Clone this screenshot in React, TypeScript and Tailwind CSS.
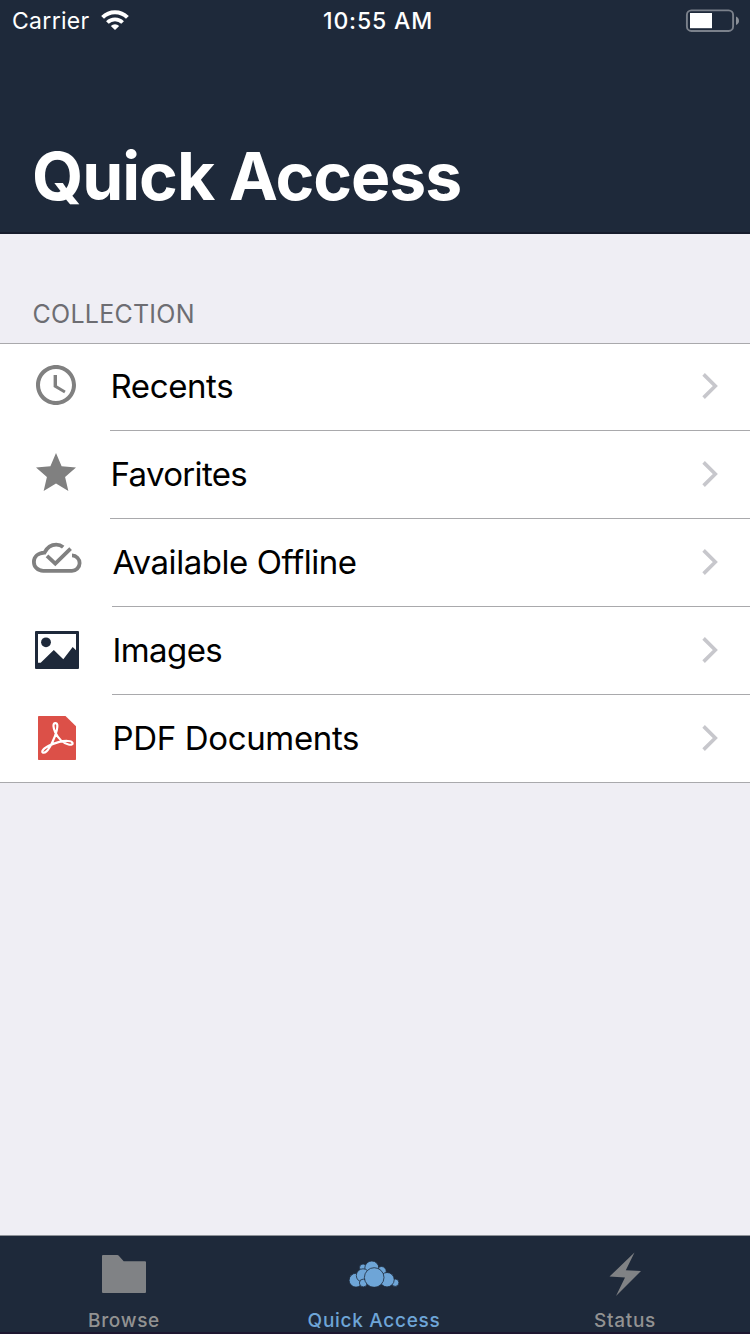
import type { ReactNode } from "react";

function Wifi() {
  return (
    <svg width="28" height="20" viewBox="0 0 28 20" className="ml-[11px] -mt-[2px]">
      <path d="M14 20L9.8 15.9A6.2 6.2 0 0 1 18.2 15.9Z" fill="#fff" />
      <path d="M6.4 12.5A10.8 10.8 0 0 1 21.6 12.5" fill="none" stroke="#fff" strokeWidth="3.8" />
      <path d="M1.6 7.4A17.6 17.6 0 0 1 26.4 7.4" fill="none" stroke="#fff" strokeWidth="4" />
    </svg>
  );
}

function Battery() {
  return (
    <svg width="54" height="24" viewBox="0 0 54 24">
      <rect x="1.9" y="1.4" width="46.2" height="20.6" rx="4.5" fill="none" stroke="#7b818b" strokeWidth="1.9" />
      <rect x="5" y="4" width="22" height="15.2" fill="#fff" />
      <path d="M51 7.5q3 1.3 3 4.3t-3 4.3z" fill="#8b9098" />
    </svg>
  );
}

function ClockIcon() {
  return (
    <svg width="48" height="48" viewBox="0 0 24 24" fill="#808080" className="ml-8 mt-[17px]">
      <path d="M11.99 2C6.47 2 2 6.48 2 12s4.47 10 9.99 10C17.52 22 22 17.52 22 12S17.52 2 11.99 2zM12 20c-4.42 0-8-3.58-8-8s3.58-8 8-8 8 3.58 8 8-3.58 8-8 8zM12.5 7H10.8v6l5.3 3.1.75-1.25-4.35-2.6z" />
    </svg>
  );
}

function StarIcon() {
  return (
    <svg width="48" height="48" viewBox="0 0 24 24" fill="#808080" className="ml-8 mt-[17px]">
      <path d="M12 17.27L18.18 21l-1.64-7.03L22 9.24l-7.19-.61L12 2 9.19 8.63 2 9.24l5.46 4.73L5.82 21z" />
    </svg>
  );
}

function CloudCheckIcon() {
  return (
    <svg width="50" height="31" viewBox="0 0 50 31" fill="none" stroke="#808080" strokeWidth="3.8" className="ml-8 mt-[22px]">
      <path d="M40 13.4A7.7 7.7 0 0 1 39.8 28.8H11.2C5.8 28.8 1.9 24.8 1.9 19.9C1.9 14.8 6 11 12.5 10.6C15.2 5.2 19.3 2.6 24.2 2.6Q28.2 2.6 31.2 5.1" />
      <path d="M15 13.8L23.3 21.6L38.6 6.7" />
    </svg>
  );
}

function ImageIcon() {
  return (
    <svg width="44" height="38" viewBox="0 0 44 38" fill="#1e293a" className="ml-[35px] mt-[23px]">
      <path fillRule="evenodd" d="M1 0H43Q44 0 44 1V37Q44 38 43 38H1Q0 38 0 37V1Q0 0 1 0ZM3 3V31.7H5.7L18.8 19L28.3 28.3L37.7 16L41 19.3V3Z" />
      <circle cx="11" cy="11.3" r="4.9" />
    </svg>
  );
}

function PdfIcon() {
  return (
    <svg width="38" height="44" viewBox="0 0 38 44" className="ml-[38px] mt-5">
      <path d="M0.7 0H27.5L38 10.3V43.3Q38 44 37.3 44H.7Q0 44 0 43.3V.7Q0 0 .7 0Z" fill="#dc5048" />
      <path
        d="M17.4 7.1C14.6 7 15.1 11.9 17.3 16.5C19.6 21.3 24.6 27.2 30.5 28.5C33.4 29.1 35 28.5 34.6 26.9C34 24.6 27 24.4 20.5 26.1C13.4 27.9 5.7 31.7 4.4 35C3.7 37 6.2 37.5 8.4 35.4C12.2 31.8 17 21.5 18.7 14.4C19.8 9.9 19.7 7.2 17.4 7.1Z"
        fill="none"
        stroke="#fff"
        strokeWidth="2.2"
      />
    </svg>
  );
}

function Chevron() {
  return (
    <svg width="18" height="28" viewBox="0 0 18 28" fill="none" stroke="#c7c7cc" strokeWidth="3.6" className="mr-[31px] ml-auto mt-[28px]">
      <path d="M2.6 2.4L14.3 14L2.6 25.6" />
    </svg>
  );
}

function FolderIcon() {
  return (
    <svg width="44" height="38" viewBox="0 0 44 38" fill="#808285" className="mt-[19px]">
      <path d="M1 0H15.3Q16.3 0 17 .9L21.7 6.3H43Q44 6.3 44 7.3V37Q44 38 43 38H1Q0 38 0 37V1Q0 0 1 0Z" />
    </svg>
  );
}

function CloudsIcon() {
  return (
    <svg width="50" height="26" viewBox="0 0 50 26" fill="#6ea5d7" stroke="#1e293a" strokeWidth="0.8" className="mt-[25px]">
      <circle cx="14.1" cy="6.6" r="3.6" />
      <circle cx="32.5" cy="10.2" r="4.7" />
      <circle cx="22.8" cy="7" r="7" />
      <circle cx="7" cy="19.2" r="6.9" />
      <circle cx="14" cy="14.5" r="6.7" />
      <circle cx="14.3" cy="22" r="3.9" />
      <circle cx="46.2" cy="21.7" r="3.7" />
      <circle cx="38" cy="18.7" r="7.2" />
      <circle cx="25.2" cy="16.5" r="9.8" />
    </svg>
  );
}

function BoltIcon() {
  return (
    <svg width="32" height="44" viewBox="0 0 32 44" fill="#808285" className="mt-4">
      <path d="M25.5 .5L16.8 18.3L32 19.1L7 44L16 25.5L.5 24.6Z" />
    </svg>
  );
}

type RowProps = { icon: ReactNode; label: string; tracking: string; inset?: string; last?: boolean };

function Row({ icon, label, tracking, inset = "w-[112px]", last = false }: RowProps) {
  return (
    <div className={`flex items-start ${last ? "h-[87px] border-b border-[#a9a9ac]" : "h-[88px]"}`}>
      <div className={`shrink-0 ${inset}`}>{icon}</div>
      <div className={`flex flex-1 items-start ${last ? "h-[86px]" : "h-[87px] border-b border-[#a9a9ac]"}`}>
        <span className={`whitespace-nowrap pl-[0.5px] text-[33px] leading-[85px] text-black ${tracking}`}>{label}</span>
        <Chevron />
      </div>
    </div>
  );
}

type TabProps = { icon: ReactNode; label: string; color: string };

function Tab({ icon, label, color }: TabProps) {
  return (
    <div className={`flex flex-col items-center ${color}`}>
      <div className="h-[73px]">{icon}</div>
      <span className="text-[19px] font-medium leading-6 tracking-[0.7px]">{label}</span>
    </div>
  );
}

export default function App() {
  return (
    <div className="flex h-[1334px] w-[750px] flex-col overflow-hidden bg-[#efeef4] font-['Inter','Liberation_Sans',sans-serif]">
      <header className="flex h-[234px] flex-col border-b-2 border-[#161c2c] bg-[#1e293a] text-white">
        <div className="grid h-[42px] grid-cols-3 items-center">
          <div className="flex items-center pl-3">
            <span className="text-[23px] leading-[42px] tracking-[0.3px]">Carrier</span>
            <Wifi />
          </div>
          <span className="pl-[6px] text-center text-[23px] font-medium leading-[42px] tracking-[0.85px]">10:55 AM</span>
          <div className="flex justify-end pr-[11px]">
            <Battery />
          </div>
        </div>
        <h1 className="mt-[94px] pl-8 text-[66px] font-bold leading-[80px] tracking-[-1.05px]">Quick Access</h1>
      </header>

      <main className="flex-1">
        <h2 className="h-[109px] pl-[32.5px] pt-[65px] text-[25px] leading-[30px] tracking-[0.25px] text-[#6d6d72]">COLLECTION</h2>
        <div className="border-t border-[#a9a9ac] bg-white">
          <Row icon={<ClockIcon />} label="Recents" tracking="tracking-[-0.4px]" inset="w-[110px]" />
          <Row icon={<StarIcon />} label="Favorites" tracking="tracking-[-0.65px]" inset="w-[110px]" />
          <Row icon={<CloudCheckIcon />} label="Available Offline" tracking="tracking-[-0.45px]" />
          <Row icon={<ImageIcon />} label="Images" tracking="tracking-[-0.6px]" />
          <Row icon={<PdfIcon />} label="PDF Documents" tracking="tracking-[-0.35px]" last />
        </div>
      </main>

      <nav className="grid h-[99px] grid-cols-[248px_252px_250px] border-b-2 border-t border-b-[#1d1730] border-t-[#8e9298] bg-[#1e293a]">
        <Tab icon={<FolderIcon />} label="Browse" color="text-[#929292]" />
        <Tab icon={<CloudsIcon />} label="Quick Access" color="text-[#6ea5d7]" />
        <Tab icon={<BoltIcon />} label="Status" color="text-[#929292]" />
      </nav>
    </div>
  );
}
